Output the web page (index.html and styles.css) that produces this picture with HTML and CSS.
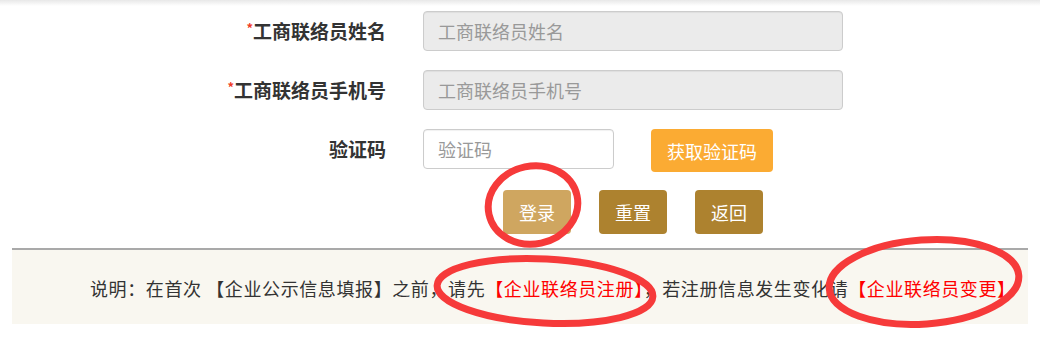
FILE: index.html
```html
<!DOCTYPE html>
<html lang="zh-CN">
<head>
  <meta charset="UTF-8">
  <title>工商联络员登录</title>
  <link rel="stylesheet" href="styles.css">
</head>
<body>
  <div class="page">
    <div class="topbar"></div>

    <!-- 登录表单 -->
    <form class="login-form">
      <div class="form-row">
        <label class="form-label"><span class="req">*</span>工商联络员姓名</label>
        <input class="form-input readonly" type="text" placeholder="工商联络员姓名">
      </div>
      <div class="form-row">
        <label class="form-label"><span class="req">*</span>工商联络员手机号</label>
        <input class="form-input readonly" type="text" placeholder="工商联络员手机号">
      </div>
      <div class="form-row">
        <label class="form-label">验证码</label>
        <input class="form-input short" type="text" placeholder="验证码">
        <button type="button" class="btn btn-code">获取验证码</button>
      </div>
      <div class="btn-row">
        <button type="button" class="btn btn-login">登录</button>
        <button type="reset" class="btn btn-dark">重置</button>
        <button type="button" class="btn btn-dark">返回</button>
      </div>
    </form>

    <!-- 说明 -->
    <div class="notice">
      说明：在首次 【企业公示信息填报】之前，请先<a href="#">【企业联络员注册】</a>，若注册信息发生变化请<a href="#">【企业联络员变更】</a>
    </div>

    <!-- 红圈标注 -->
    <svg class="marks" width="1040" height="337" viewBox="0 0 1040 337">
      <ellipse cx="533" cy="205" rx="45" ry="39" transform="rotate(-12 533 205)" />
      <ellipse cx="545" cy="291" rx="108" ry="32" transform="rotate(3 545 291)" />
      <ellipse cx="924" cy="282" rx="95" ry="42" transform="rotate(-4 924 282)" />
    </svg>
  </div>
</body>
</html>
```

FILE: styles.css
```css
/* 기본 레이아웃 */
body {
  margin: 0;
  background: #fff;
  font-family: "Noto Sans CJK SC", "Liberation Sans", sans-serif;
  color: #333;
}
.page { position: relative; width: 1040px; height: 337px; overflow: hidden; }
.topbar { height: 6px; background: linear-gradient(#e8e8e8, #fff); }

/* 表单 */
.login-form { padding-top: 5px; }
.form-row {
  display: flex;
  align-items: flex-start;
  margin-bottom: 19px;
}
.form-label {
  width: 386px;
  flex: none;
  text-align: right;
  font-size: 19px;
  font-weight: bold;
  line-height: 40px;
  color: #333;
}
.req { color: #f03c2a; font-size: 13px; vertical-align: top; line-height: 34px; }
.form-input {
  margin-left: 37px;
  width: 420px;
  height: 40px;
  box-sizing: border-box;
  padding: 0 14px;
  border: 1px solid #ccc;
  border-radius: 4px;
  box-shadow: inset 0 1px 1px rgba(0,0,0,.06);
  font-family: inherit;
  font-size: 18px;
  color: #555;
  background: #fff;
}
.form-input::placeholder { color: #999; }
.form-input.readonly { background: #ebebeb; }
.form-input.short { width: 191px; }

.btn {
  height: 44px;
  padding: 0 16px;
  border: 0;
  border-radius: 4px;
  font-family: inherit;
  font-size: 18px;
  color: #fff;
  cursor: pointer;
}
.btn-code { margin-left: 37px; height: 43px; background: #fbab33; }
.btn-row { display: flex; gap: 28px; padding-left: 503px; margin-top: -1px; }
.btn-login { background: #cfa660; }
.btn-dark { background: #ad822f; }

/* 说明栏 */
.notice {
  margin: 14px 12px 0;
  border-top: 2px solid #a9a9a9;
  background: #f9f7f0;
  height: 74px;
  line-height: 76px;
  padding-left: 78px;
  font-size: 18px;
  letter-spacing: 0.6px;
  color: #333;
  white-space: nowrap;
}
.notice a { color: #f00; text-decoration: none; }

/* 标注 */
.marks { position: absolute; left: 0; top: 0; pointer-events: none; }
.marks ellipse { fill: none; stroke: #f63a3a; stroke-width: 7; }
```
